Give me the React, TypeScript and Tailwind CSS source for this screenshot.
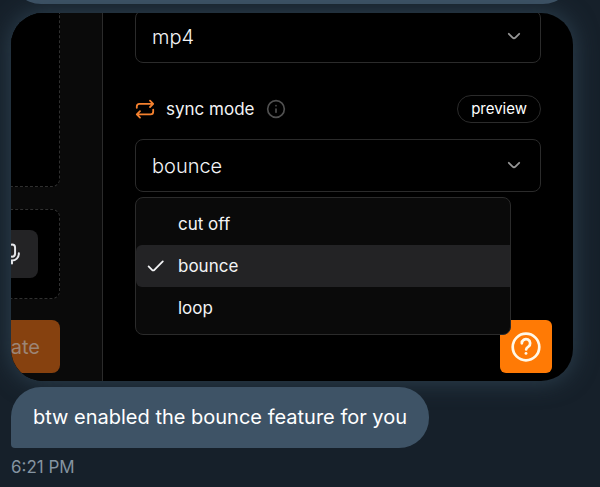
/**
 * Direct message thread
 *
 * Shows the tail of a conversation: an attached capture of the video
 * settings panel, the reply under it and the time it was sent.
 */
import { useState } from 'react';
import type { ReactNode } from 'react';
import { Info } from 'lucide-react';

const SYNC_MODES = ['cut off', 'bounce', 'loop'];

/* Shared frame for the rounded line icons */
function LineIcon({ className, children }: { className: string; children: ReactNode }) {
  return (
    <svg
      aria-hidden="true"
      viewBox="0 0 20 20"
      fill="none"
      stroke="currentColor"
      strokeWidth="1.8"
      strokeLinecap="round"
      strokeLinejoin="round"
      className={className}
    >
      {children}
    </svg>
  );
}

interface SelectFieldProps {
  label: string;
  value: string;
  options: string[];
  onChange: (value: string) => void;
}

function SelectField({ label, value, options, onChange }: SelectFieldProps) {
  return (
    <div className="relative">
      <select
        aria-label={label}
        value={value}
        onChange={(e) => onChange(e.target.value)}
        className="block w-full h-[53px] appearance-none rounded-lg border border-[#2b2b2b] bg-black px-4 text-xl font-light text-gray-100 focus:outline-none"
      >
        {options.map((option) => (
          <option key={option}>{option}</option>
        ))}
      </select>
      <LineIcon className="pointer-events-none absolute right-[17px] top-4 w-5 h-5 text-[#969696]">
        <path d="M4.8 7.8 8.6 11.6q1.4 1.4 2.8 0L15.2 7.8" />
      </LineIcon>
    </div>
  );
}

/* Upload boxes and submit button, cut off by the left edge of the attachment */
function UploadColumn() {
  return (
    <div className="w-[92px] shrink-0 flex flex-col items-end overflow-hidden border-r border-[#2b2b2b] bg-[#0a0a0a] pr-[42px]">
      <div className="w-32 h-[174px] shrink-0 rounded-b-lg border border-t-0 border-dashed border-[#303030] bg-black" />
      <div className="mt-[22px] w-32 h-[90px] shrink-0 flex items-center justify-end rounded-lg border border-dashed border-[#303030] bg-black pr-[21px]">
        <button
          aria-label="Record audio"
          className="w-[52px] h-12 flex items-center justify-center rounded-lg bg-[#232325] text-gray-200"
        >
          <LineIcon className="w-[22px] h-[22px]">
            <rect x="7.2" y="1.4" width="5.6" height="11" rx="2.8" />
            <path d="M3.8 9.2v.6a6.2 6.2 0 0 0 12.4 0v-.6M10 16v2.6" />
          </LineIcon>
        </button>
      </div>
      <button
        aria-label="generate"
        className="mt-[21px] w-32 h-[53px] shrink-0 rounded-lg bg-[#86410f] pr-5 text-right text-xl text-[#9c8576]"
      >
        ate
      </button>
    </div>
  );
}

function SyncMenu({ value, onChange }: { value: string; onChange: (value: string) => void }) {
  return (
    <div
      role="listbox"
      aria-label="sync mode options"
      className="absolute left-0 right-[30px] top-full z-10 mt-[5px] rounded-lg border border-[#2b2b2b] bg-[#0a0a0a] py-[5px]"
    >
      {SYNC_MODES.map((mode) => (
        <button
          key={mode}
          role="option"
          aria-selected={mode === value}
          onClick={() => onChange(mode)}
          className={`flex w-full h-[42px] items-center gap-3 pl-[10px] text-left text-[17px] leading-6 text-gray-100 ${
            mode === value ? 'rounded-l-md bg-[#232325]' : ''
          }`}
        >
          <LineIcon className={`w-5 h-5 ${mode === value ? '' : 'invisible'}`}>
            <path d="M2.6 10.4 6 13.8q1.2 1.2 2.4 0L16.8 5.4" />
          </LineIcon>
          {mode}
        </button>
      ))}
    </div>
  );
}

function Attachment() {
  const [format, setFormat] = useState('mp4');
  const [syncMode, setSyncMode] = useState('bounce');

  return (
    <div className="relative flex h-[368px] overflow-hidden rounded-[32px] bg-black shadow-[0_0_24px_0_#2f4352]">
      <UploadColumn />
      <div className="flex-1 min-w-0 px-8">
        <div className="-mt-[3px]">
          <SelectField label="format" value={format} options={['mp4', 'webm']} onChange={setFormat} />
        </div>
        <div className="mt-8 flex h-7 items-center justify-between">
          <div className="flex items-center text-gray-100">
            <LineIcon className="w-5 h-5 text-[#f5812f]">
              <path d="M1.8 8.8V7.4q0-2.6 2.6-2.6H18M15 1.6l3.2 3.2L15 8M18.2 10.6V12.8q0 2.6-2.6 2.6H2M5 12.2l-3.2 3.2L5 18.6" />
            </LineIcon>
            <span className="ml-[11px] text-[17px] leading-7">sync mode</span>
            <Info className="ml-3 w-5 h-5 text-[#505050]" strokeWidth={2} />
          </div>
          <button className="h-7 rounded-full border border-[#2b2b2b] px-[13px] text-[15px] leading-6 text-white">
            preview
          </button>
        </div>
        <div className="relative mt-4">
          <SelectField label="sync mode" value={syncMode} options={SYNC_MODES} onChange={setSyncMode} />
          <SyncMenu value={syncMode} onChange={setSyncMode} />
        </div>
      </div>
      <button
        aria-label="Help"
        className="absolute bottom-2 right-[21px] w-[52px] h-[53px] flex items-center justify-center rounded-md bg-[#ff7a05] text-[#fff8e8]"
      >
        <LineIcon className="w-8 h-8">
          <circle cx="10" cy="10" r="8.3" strokeWidth="1.7" />
          <path strokeWidth="1.7" d="M7.4 7.7a2.6 2.6 0 1 1 4.1 2.1c-.9.6-1.4 1-1.4 1.7" />
          <circle cx="10" cy="14" r=".9" fill="currentColor" stroke="none" />
        </LineIcon>
      </button>
    </div>
  );
}

function App() {
  return (
    <div className="min-h-screen overflow-hidden bg-[#16202a] pl-[11px] pr-[27px] font-[Inter,sans-serif]">
      {/* Lower edge of the previous message */}
      <div className="h-1 overflow-hidden flex flex-col justify-end">
        <div className="h-[60px] shrink-0 rounded-b-[30px] bg-[#3e5366]" />
      </div>
      <div className="mt-[9px]">
        <Attachment />
      </div>
      <div className="relative mt-[6px] w-fit rounded-[30px] rounded-bl-[4px] bg-[#3e5366] px-[22px] py-4 text-xl leading-[29px] text-white">
        btw enabled the bounce feature for you
      </div>
      <div className="mt-1 text-[17px] leading-[30px] text-[#8594a1]">6:21 PM</div>
    </div>
  );
}

export default App;
